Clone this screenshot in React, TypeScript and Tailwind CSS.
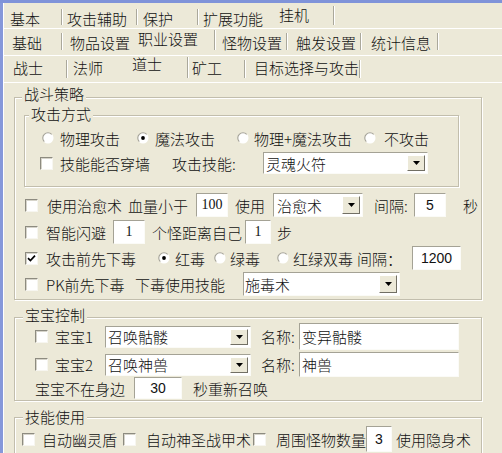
import React from "react";

type TabProps = { label: string; w: string; txt: string; sep?: string };

function Tab({ label, w, txt, sep }: TabProps) {
  return (
    <div className={`flex shrink-0 ${w}`}>
      <div className={`flex-1 flex items-center whitespace-nowrap ${txt}`}>{label}</div>
      {sep ? (
        <div className={`self-end w-[2px] shrink-0 border-l border-l-[#aaa89b] border-r border-r-white ${sep}`} />
      ) : null}
    </div>
  );
}

function Group({
  label,
  cls,
  labelCls,
  children,
}: {
  label: string;
  cls: string;
  labelCls: string;
  children?: React.ReactNode;
}) {
  return (
    <div
      className={`relative shrink-0 flex flex-col border border-[#c2bead] shadow-[inset_1px_1px_0_#ffffff,1px_1px_0_#ffffff] ${cls}`}
    >
      <span className={`absolute px-[2px] bg-[#ece9d8] leading-none whitespace-nowrap ${labelCls}`}>{label}</span>
      {children}
    </div>
  );
}

function Check({ checked, cls = "" }: { checked?: boolean; cls?: string }) {
  return (
    <div
      className={`w-[13px] h-[13px] shrink-0 bg-white border border-t-[#8d8b80] border-l-[#8d8b80] border-r-[#f7f6f0] border-b-[#f7f6f0] shadow-[inset_1px_1px_0_#d6d4ca] flex items-center justify-center ${cls}`}
    >
      {checked ? (
        <svg width="9" height="9" viewBox="0 0 9 9">
          <path d="M1 4.2 L3.4 6.6 L8 1.6" stroke="#000" strokeWidth="1.7" fill="none" />
        </svg>
      ) : null}
    </div>
  );
}

function Radio({ checked, cls = "" }: { checked?: boolean; cls?: string }) {
  return (
    <svg width="12" height="12" viewBox="0 0 12 12" className={`shrink-0 ${cls}`}>
      <circle cx="6" cy="6" r="5.5" fill="#ffffff" />
      <path d="M2.3 9.7 A5.2 5.2 0 0 1 9.7 2.3" stroke="#a3a195" strokeWidth="1.1" fill="none" />
      {checked ? <circle cx="6" cy="6" r="1.9" fill="#000" /> : null}
    </svg>
  );
}

function Field({ cls, children, num }: { cls: string; children?: React.ReactNode; num?: string }) {
  return (
    <div
      className={`shrink-0 bg-white border border-t-[#a4a295] border-l-[#a4a295] border-r-[#fbfbf7] border-b-[#fbfbf7] flex items-center whitespace-nowrap ${
        num ? `justify-center ${num}` : "pl-[2px]"
      } ${cls}`}
    >
      {children}
    </div>
  );
}

function Select({ cls, text, pl = "pl-[2px]" }: { cls: string; text: string; pl?: string }) {
  return (
    <div
      className={`shrink-0 bg-white border border-t-[#a4a295] border-l-[#a4a295] border-r-[#fbfbf7] border-b-[#fbfbf7] flex items-center justify-between ${cls}`}
    >
      <span className={`whitespace-nowrap ${pl}`}>{text}</span>
      <div className="w-[18px] self-stretch my-[2px] mr-[2px] bg-[#ece9d8] border border-t-white border-l-white border-r-[#716f64] border-b-[#716f64] flex items-center justify-center">
        <svg width="7" height="4" viewBox="0 0 7 4">
          <path d="M0 0 H7 L3.5 4 Z" fill="#000" />
        </svg>
      </div>
    </div>
  );
}

const sans = "font-['Liberation_Sans',sans-serif] text-[14px]";
const serif = "font-['Liberation_Serif',serif] text-[14px]";

export default function App() {
  return (
    <div className="w-[502px] h-[453px] overflow-hidden bg-[#ece9d8] flex flex-col font-['Noto_Sans_CJK_SC','Noto_Sans',sans-serif] font-light text-[15px] leading-none text-[#111]">
      <div className="h-[3px] shrink-0 bg-[#7f93d9]" />
      <div className="flex flex-1 min-h-0">
        <div className="w-[3px] shrink-0 bg-[#8698da]" />
        <div className="w-[1px] shrink-0 bg-white" />
        <div className="flex-1 flex flex-col min-w-0">
          {/* tab row 1 */}
          <div className="flex h-[25px] shrink-0">
            <Tab label="基本" w="w-[59px]" txt="pl-[6px] pt-[6px]" sep="h-[16px] mb-[3px]" />
            <Tab label="攻击辅助" w="w-[75px]" txt="pl-[4px] pt-[6px]" sep="h-[16px] mb-[3px]" />
            <Tab label="保护" w="w-[61px]" txt="pl-[5px] pt-[6px]" sep="h-[16px] mb-[3px]" />
            <Tab label="扩展功能" w="w-[68px]" txt="pl-[4px] pt-[6px]" />
            <Tab label="挂机" w="w-[68px]" txt="pl-[12px] pb-[3px]" sep="h-[19px] mb-[3px]" />
          </div>
          {/* tab row 2 */}
          <div className="flex h-[27px] shrink-0 border-t border-white">
            <Tab label="基础" w="w-[59px]" txt="pl-[8px]" sep="h-[17px] mb-[5px]" />
            <Tab label="物品设置" w="w-[72px]" txt="pl-[7px]" />
            <Tab label="职业设置" w="w-[81px]" txt="pl-[3px] pb-[7px]" sep="h-[20px] mb-[5px]" />
            <Tab label="怪物设置" w="w-[72px]" txt="pl-[6px]" sep="h-[17px] mb-[5px]" />
            <Tab label="触发设置" w="w-[74px]" txt="pl-[8px]" sep="h-[17px] mb-[5px]" />
            <Tab label="统计信息" w="w-[77px]" txt="pl-[9px]" sep="h-[17px] mb-[5px]" />
          </div>
          {/* tab row 3 */}
          <div className="flex h-[27px] shrink-0 border-t border-white">
            <Tab label="战士" w="w-[64px]" txt="pl-[9px] pb-[3px]" sep="h-[18px] mb-[4px]" />
            <Tab label="法师" w="w-[57px]" txt="pl-[5px] pb-[3px]" />
            <Tab label="道士" w="w-[64px]" txt="pl-[7px] pb-[11px]" sep="h-[21px] mb-[4px]" />
            <Tab label="矿工" w="w-[57px]" txt="pl-[3px] pb-[3px]" sep="h-[18px] mb-[4px]" />
            <Tab label="目标选择与攻击" w="w-[114px]" txt="pl-[8px] pb-[3px]" sep="h-[18px] mb-[4px]" />
          </div>

          {/* page */}
          <div className="flex-1 flex flex-col border-t border-white pl-[10px]">
            {/* 战斗策略 */}
            <Group label="战斗策略" cls="mt-[14px] w-[468px] h-[203px]" labelCls="-top-[12px] left-[7px]">
              <Group label="攻击方式" cls="ml-[9px] mt-[17px] w-[435px] h-[72px]" labelCls="-top-[10px] left-[4px]">
                <div className="mt-[12px] h-[20px] flex items-center">
                  <Radio cls="ml-[17px]" />
                  <span className="ml-[6px] w-[77px] shrink-0 whitespace-nowrap">物理攻击</span>
                  <Radio checked />
                  <span className="ml-[6px] w-[82px] shrink-0 whitespace-nowrap">魔法攻击</span>
                  <Radio />
                  <span className="ml-[5px] w-[110px] shrink-0 whitespace-nowrap">物理+魔法攻击</span>
                  <Radio />
                  <span className="ml-[8px] whitespace-nowrap">不攻击</span>
                </div>
                <div className="mt-[4px] h-[22px] flex items-center">
                  <Check cls="ml-[15px]" />
                  <span className="ml-[7px] w-[112px] shrink-0 whitespace-nowrap">技能能否穿墙</span>
                  <span className="w-[91px] shrink-0 whitespace-nowrap">攻击技能:</span>
                  <Select cls="w-[165px] h-[22px]" text="灵魂火符" />
                </div>
              </Group>

              <div className="mt-[5px] pl-[10px] flex flex-col">
                <div className="h-[26px] flex items-center">
                  <Check />
                  <span className="ml-[9px] w-[81px] shrink-0 whitespace-nowrap">使用治愈术</span>
                  <span className="w-[68px] shrink-0 whitespace-nowrap">血量小于</span>
                  <Field cls="w-[32px] h-[24px]" num={serif}>100</Field>
                  <span className="ml-[7px] w-[38px] shrink-0 whitespace-nowrap">使用</span>
                  <Select cls="w-[90px] h-[24px]" text="治愈术" pl="pl-[3px]" />
                  <span className="ml-[11px] w-[40px] shrink-0 whitespace-nowrap">间隔:</span>
                  <Field cls="w-[32px] h-[24px]" num={sans}>5</Field>
                  <span className="ml-[17px] whitespace-nowrap">秒</span>
                </div>
                <div className="mt-[1px] h-[26px] flex items-center">
                  <Check />
                  <span className="ml-[8px] w-[67px] shrink-0 whitespace-nowrap">智能闪避</span>
                  <Field cls="w-[32px] h-[24px]" num={serif}>1</Field>
                  <span className="ml-[7px] w-[93px] shrink-0 whitespace-nowrap">个怪距离自己</span>
                  <Field cls="w-[26px] h-[24px]" num={serif}>1</Field>
                  <span className="ml-[6px] whitespace-nowrap">步</span>
                </div>
                <div className="h-[26px] flex items-center">
                  <Check checked />
                  <span className="ml-[8px] w-[112px] shrink-0 whitespace-nowrap">攻击前先下毒</span>
                  <Radio checked />
                  <span className="ml-[5px] w-[39px] shrink-0 whitespace-nowrap">红毒</span>
                  <Radio />
                  <span className="ml-[4px] w-[47px] shrink-0 whitespace-nowrap">绿毒</span>
                  <Radio />
                  <span className="ml-[4px] w-[64px] shrink-0 whitespace-nowrap">红绿双毒</span>
                  <span className="w-[55px] shrink-0 whitespace-nowrap">间隔：</span>
                  <Field cls="w-[49px] h-[24px]" num={sans}>1200</Field>
                </div>
                <div className="h-[26px] flex items-center">
                  <Check />
                  <span className="ml-[8px] w-[89px] shrink-0 whitespace-nowrap">PK前先下毒</span>
                  <span className="w-[108px] shrink-0 whitespace-nowrap">下毒使用技能</span>
                  <Select cls="w-[157px] h-[24px]" text="施毒术" pl="pl-[1px]" />
                </div>
              </div>
            </Group>

            {/* 宝宝控制 */}
            <Group label="宝宝控制" cls="mt-[17px] w-[468px] h-[84px]" labelCls="-top-[11px] left-[8px]">
              <div className="mt-[5px] h-[27px] flex items-center">
                <Check cls="ml-[20px]" />
                <span className="ml-[7px] w-[50px] shrink-0 whitespace-nowrap">宝宝1</span>
                <Select cls="w-[146px] h-[22px]" text="召唤骷髅" />
                <span className="ml-[10px] w-[38px] shrink-0 whitespace-nowrap">名称:</span>
                <Field cls="w-[160px] h-[27px]">变异骷髅</Field>
              </div>
              <div className="mt-[2px] h-[25px] flex items-center">
                <Check cls="ml-[20px]" />
                <span className="ml-[7px] w-[50px] shrink-0 whitespace-nowrap">宝宝2</span>
                <Select cls="w-[146px] h-[22px]" text="召唤神兽" />
                <span className="ml-[10px] w-[38px] shrink-0 whitespace-nowrap">名称:</span>
                <Field cls="w-[160px] h-[25px]">神兽</Field>
              </div>
              <div className="h-[22px] flex items-center">
                <span className="ml-[20px] w-[99px] shrink-0 whitespace-nowrap">宝宝不在身边</span>
                <Field cls="w-[48px] h-[22px]" num={sans}>30</Field>
                <span className="ml-[11px] whitespace-nowrap">秒重新召唤</span>
              </div>
            </Group>

            {/* 技能使用 */}
            <Group label="技能使用" cls="mt-[16px] w-[468px] h-[60px]" labelCls="-top-[9px] left-[8px]">
              <div className="mt-[8px] h-[26px] flex items-center">
                <Check cls="ml-[7px]" />
                <span className="ml-[7px] w-[81px] shrink-0 whitespace-nowrap">自动幽灵盾</span>
                <Check />
                <span className="ml-[10px] w-[107px] shrink-0 whitespace-nowrap">自动神圣战甲术</span>
                <Check />
                <span className="ml-[10px] w-[90px] shrink-0 whitespace-nowrap">周围怪物数量</span>
                <Field cls="w-[26px] h-[26px]" num={sans}>3</Field>
                <span className="ml-[4px] whitespace-nowrap">使用隐身术</span>
              </div>
            </Group>
          </div>
        </div>
      </div>
    </div>
  );
}
